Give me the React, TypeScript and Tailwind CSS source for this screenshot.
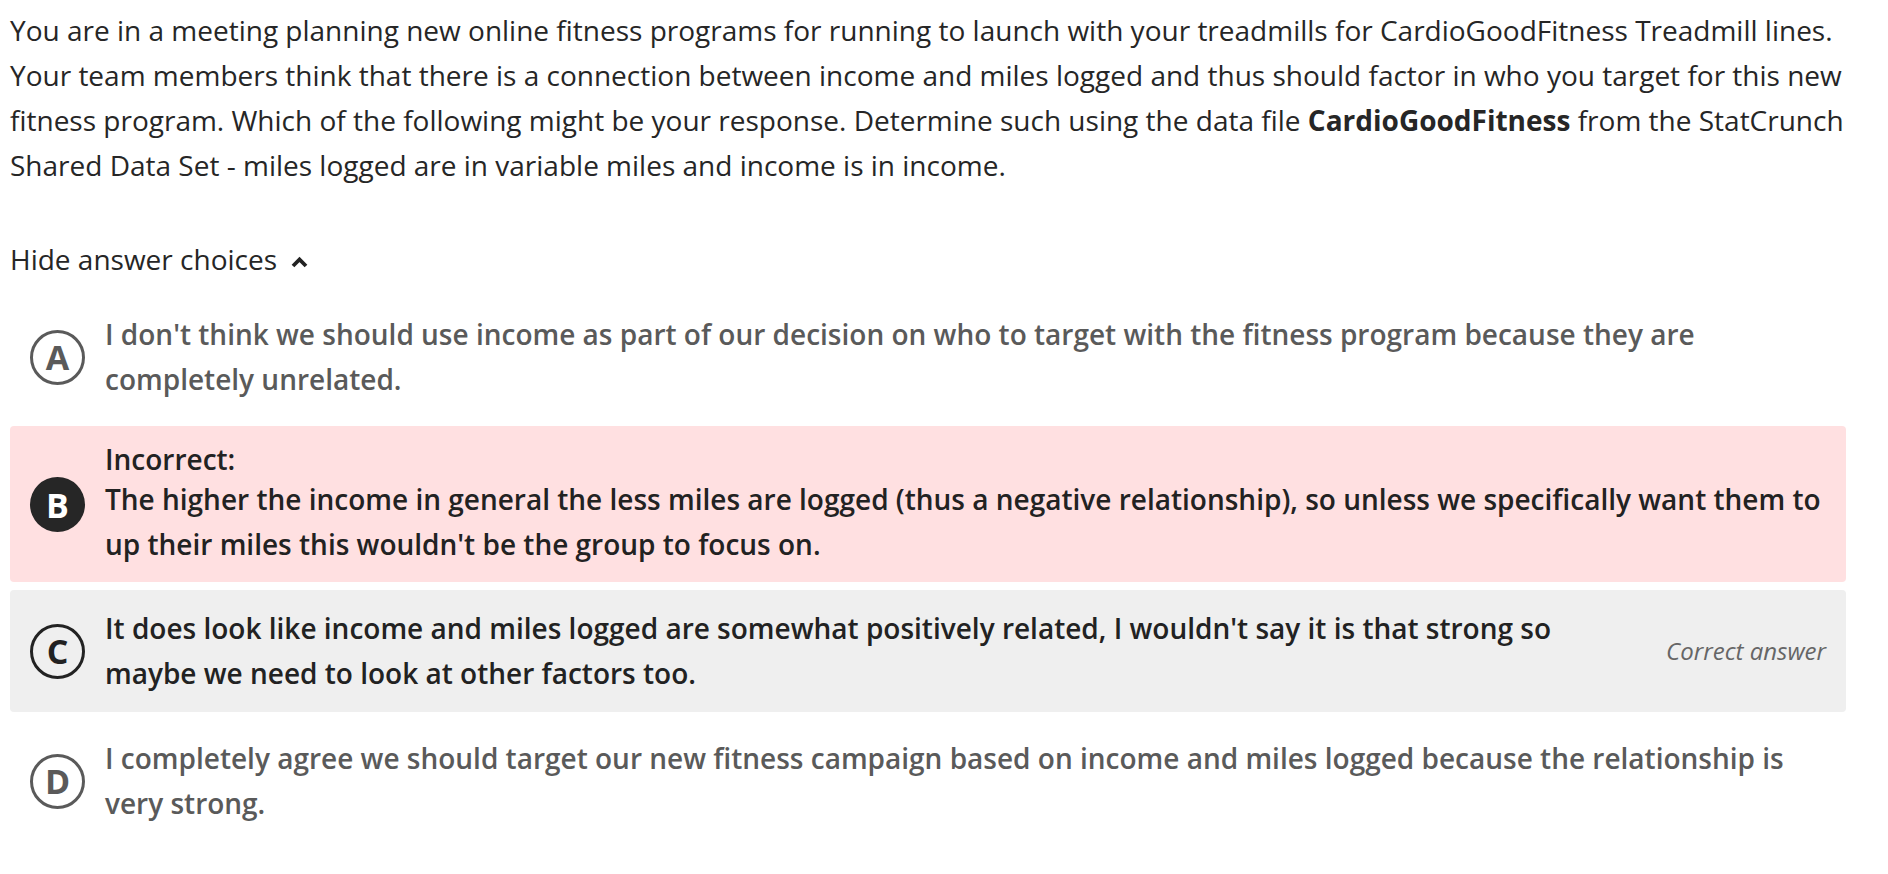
import React from "react";

const font = { fontFamily: '"Open Sans", "Noto Sans", sans-serif' };

function Letter({ l, variant }: { l: string; variant: "muted" | "filled" | "dark" }) {
  if (variant === "filled") {
    return (
      <div className="flex h-[55px] w-[55px] shrink-0 items-center justify-center rounded-full bg-[#262626] text-[34px] font-bold leading-none text-white">
        {l}
      </div>
    );
  }
  const cls =
    variant === "dark"
      ? "border-[#222222] text-[#222222]"
      : "border-[#5a5a5a] text-[#5a5a5a]";
  return (
    <div
      className={`flex h-[55px] w-[55px] shrink-0 items-center justify-center rounded-full border-[3px] text-[34px] font-bold leading-none ${cls}`}
    >
      {l}
    </div>
  );
}

export default function App() {
  return (
    <div className="min-h-[874px] bg-white px-[10px] pt-[8px] text-[#262626]" style={font}>
      <div className="w-[1836px]">
        <p className="text-[28px] leading-[45px]">
          You are in a meeting planning new online fitness programs for running to launch with your treadmills for
          CardioGoodFitness Treadmill lines. Your team members think that there is a connection between income and
          miles logged and thus should factor in who you target for this new fitness program. Which of the following
          might be your response. Determine such using the data file <b className="font-bold">CardioGoodFitness</b>{" "}
          from the StatCrunch Shared Data Set - miles logged are in variable miles and income is in income.
        </p>

        <div className="mt-[49px] flex items-center gap-[14px] text-[28px] leading-[45px]">
          <span>Hide answer choices</span>
          <svg width="17" height="12" viewBox="0 0 17 12" className="mt-[4px]">
            <path d="M2 10 L8.5 3.5 L15 10" fill="none" stroke="#222222" strokeWidth="3.8" />
          </svg>
        </div>

        <div className="mt-[14px] flex flex-col gap-[8px]">
          <div className="flex items-center gap-[20px] rounded-[4px] px-[20px] py-[16px]">
            <Letter l="A" variant="muted" />
            <div className="text-[28px] font-semibold leading-[45px] text-[#5a5a5a]">
              I don't think we should use income as part of our decision on who to target with the fitness program
              because they are completely unrelated.
            </div>
          </div>

          <div className="flex items-center gap-[20px] rounded-[4px] bg-[#ffe0e1] px-[20px] pb-[15px] pt-[16px]">
            <Letter l="B" variant="filled" />
            <div className="text-[28px] font-semibold text-[#222222]">
              <div className="leading-[35px]">Incorrect:</div>
              <div className="leading-[45px]">
                The higher the income in general the less miles are logged (thus a negative relationship), so unless
                we specifically want them to up their miles this wouldn't be the group to focus on.
              </div>
            </div>
          </div>

          <div className="flex items-center gap-[20px] rounded-[4px] bg-[#efefef] py-[16px] pl-[20px] pr-[20px]">
            <Letter l="C" variant="dark" />
            <div className="flex-1 pr-[60px] text-[28px] font-semibold leading-[45px] text-[#222222]">
              It does look like income and miles logged are somewhat positively related, I wouldn't say it is that
              strong so maybe we need to look at other factors too.
            </div>
            <div className="shrink-0 text-[24px] italic text-[#666666]">Correct answer</div>
          </div>

          <div className="flex items-center gap-[20px] rounded-[4px] px-[20px] py-[16px]">
            <Letter l="D" variant="muted" />
            <div className="text-[28px] font-semibold leading-[45px] text-[#5a5a5a]">
              I completely agree we should target our new fitness campaign based on income and miles logged because
              the relationship is very strong.
            </div>
          </div>
        </div>
      </div>
    </div>
  );
}
